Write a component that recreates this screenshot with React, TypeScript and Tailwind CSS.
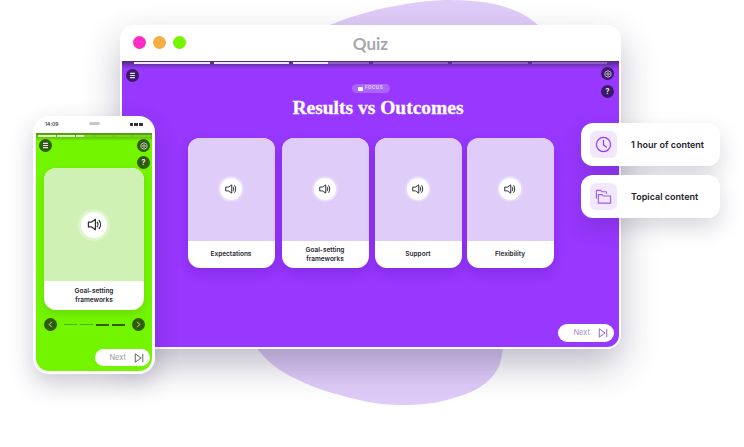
import React from "react";

const Speaker = ({ s = 12 }: { s?: number }) => (
  <svg width={s} height={s} viewBox="0 0 16 16" fill="none" stroke="#2b2b33" strokeWidth="1.300" strokeLinejoin="round" strokeLinecap="round">
    <path d="M1.500 5.500h3L9 2.500v11l-4.500-3h-3z" />
    <path d="M11 5.500c1 1.500 1 3.500 0 5" />
    <path d="M13 3.500c1.800 2.500 1.800 6.500 0 9" />
  </svg>
);

const Sound = ({ big }: { big?: boolean }) => (
  <div className={big ? "flex h-[32px] w-[32px] items-center justify-center rounded-full bg-white/30" : "flex h-[26px] w-[26px] items-center justify-center rounded-full bg-white/30"}>
    <div className={big ? "flex h-[26px] w-[26px] items-center justify-center rounded-full bg-white" : "flex h-[22px] w-[22px] items-center justify-center rounded-full bg-white"}>
      <Speaker s={big ? 15 : 12} />
    </div>
  </div>
);

const Card = ({ label, className = "" }: { label: React.ReactNode; className?: string }) => (
  <div className={`flex h-[130px] w-[87px] flex-col overflow-hidden rounded-[12px] bg-white shadow-[0_6px_12px_rgba(60,0,130,0.2)] ${className}`}>
    <div className="flex h-[103px] items-center justify-center bg-[#e0ccf9] pb-[1px]">
      <Sound />
    </div>
    <div className="flex flex-1 items-center justify-center text-center text-[6.500px] font-semibold leading-[9px] text-[#26262e]">{label}</div>
  </div>
);

const Round = ({ children, c = "bg-[#3b1a66]" }: { children: React.ReactNode; c?: string }) => (
  <div className={`flex h-[13px] w-[13px] items-center justify-center rounded-full ${c}`}>{children}</div>
);

const Menu = ({ s = 7 }: { s?: number }) => (
  <svg width={s} height={s} viewBox="0 0 10 10" fill="none" stroke="#e8e0f2" strokeWidth="1.700">
    <path d="M1.500 2h7M1.500 5h7M1.500 8h7" />
  </svg>
);
const Gear = ({ s = 8 }: { s?: number }) => (
  <svg width={s} height={s} viewBox="0 0 10 10" fill="none" stroke="#e8e0f2" strokeWidth="1">
    <path d="M5 .8l3.700 2.100v4.200L5 9.200 1.300 7.100V2.900z" />
    <circle cx="5" cy="5" r="1.500" />
  </svg>
);
const Q = () => <span className="text-[7px] font-bold leading-none text-[#f0eaf7]">?</span>;

const NextIcon = ({ color, s = 10 }: { color: string; s?: number }) => (
  <svg width={s} height={s} viewBox="0 0 12 12" fill="none" stroke={color} strokeWidth="1.100" strokeLinejoin="round">
    <path d="M1.500 1l7 5-7 5zM10.500 1v10" />
  </svg>
);

const Tag = ({ icon, text, className }: { icon: React.ReactNode; text: string; className: string }) => (
  <div className={`absolute flex h-[43px] w-[139px] items-center rounded-[12px] bg-white pl-[9px] shadow-[0_10px_22px_rgba(40,30,70,0.18)] ${className}`}>
    <div className="flex h-[27px] w-[27px] items-center justify-center rounded-[6px] bg-[#f1e8fd]">{icon}</div>
    <span className="ml-[14px] text-[9px] font-semibold text-[#23232b]">{text}</span>
  </div>
);

const Seg = ({ fill }: { fill: "full" | "part" | "none" }) => (
  <div className="h-[2px] flex-1 bg-[#8b62c0]">
    {fill === "full" && <div className="h-full w-full bg-[#efe8f6]" />}
    {fill === "part" && <div className="h-full w-[47%] bg-[#efe8f6]" />}
  </div>
);

const PSeg = ({ fill }: { fill: "full" | "part" | "none" }) => (
  <div className="h-[2px] flex-1 bg-[#7fcf2e]">
    {fill === "full" && <div className="h-full w-full bg-[#dff7c6]" />}
    {fill === "part" && <div className="h-full w-[47%] bg-[#dff7c6]" />}
  </div>
);

export default function App() {
  return (
    <div className="relative h-[447px] w-[744px] overflow-hidden bg-white font-['Inter',sans-serif]">
      <svg className="absolute left-0 top-0" width="744" height="447" viewBox="0 0 744 447">
        <path d="M330 25C370 8 420 0 450 0C490 0 520 8 538 25V60H330Z" fill="#e0ccf9" />
        <path d="M250 340C262 355 270 364 283 372C300 382 320 390 340 395C360 401 380 405 400 405C418 405 433 404 447 400C465 395 478 390 487 382C497 373 503 364 503 340Z" fill="#e0ccf9" />
      </svg>

      <div className="absolute left-[120px] top-[25px] flex h-[324px] w-[501px] flex-col overflow-hidden rounded-[14px] bg-white p-[2px] pt-0 shadow-[0_16px_36px_rgba(40,30,70,0.3)]">
        <div className="relative flex h-[36px] flex-none items-center justify-center">
          <div className="absolute left-[11px] top-[11px] flex gap-[7px]">
            <div className="h-[13px] w-[13px] rounded-full bg-[#ff2bc2]" />
            <div className="h-[13px] w-[13px] rounded-full bg-[#f5ae42]" />
            <div className="h-[13px] w-[13px] rounded-full bg-[#76f500]" />
          </div>
          <span className="mt-[1px] font-['Lato',sans-serif] text-[17px] font-bold text-[#a8a8ad]">Quiz</span>
        </div>
        <div className="relative flex flex-1 flex-col items-center overflow-hidden rounded-b-[12px] bg-[#9837ff]">
          <div className="absolute inset-x-0 top-0 h-[8px] bg-gradient-to-b from-[#4d2a7d] to-[#9837ff]" />
          <div className="relative mt-[1px] flex w-[473px] gap-[4px]">
            <Seg fill="full" />
            <Seg fill="full" />
            <Seg fill="part" />
            <Seg fill="none" />
            <Seg fill="none" />
            <Seg fill="none" />
          </div>
          <div className="absolute left-[4px] top-[8px]"><Round><Menu /></Round></div>
          <div className="absolute right-[5px] top-[6px]"><Round><Gear /></Round></div>
          <div className="absolute right-[5px] top-[24px]"><Round><Q /></Round></div>
          <div className="mt-[20px] flex h-[9px] w-[38px] items-center justify-center gap-[2px] rounded-full bg-[#ac66ff]">
            <div className="h-[4px] w-[5px] rounded-[1px] bg-white" />
            <span className="text-[4.500px] font-semibold tracking-[0.5px] text-[#f0e4ff]">FOCUS</span>
          </div>
          <h1 className="mt-[3px] pl-[15px] font-['Liberation_Serif',serif] text-[19.500px] font-bold leading-[24px] text-white [-webkit-text-stroke:0.3px_white]">Results vs Outcomes</h1>
          <div className="mt-[18px] flex">
            <Card label="Expectations" />
            <Card className="ml-[7px]" label={<>Goal-setting<br />frameworks</>} />
            <Card className="ml-[6px]" label="Support" />
            <Card className="ml-[5px]" label="Flexibility" />
          </div>
          <div className="absolute bottom-[5px] right-[5px] flex h-[18px] w-[56px] items-center justify-end gap-[8px] rounded-full bg-white pr-[6px]">
            <span className="text-[7.500px] text-[#a98ac9]">Next</span>
            <NextIcon color="#8a55c8" />
          </div>
        </div>
      </div>

      <div className="absolute left-[33px] top-[116px] flex h-[258px] w-[122px] flex-col overflow-hidden rounded-[16px] bg-white px-[3px] pb-[3px] shadow-[0_10px_24px_rgba(40,30,70,0.24)]">
        <div className="relative flex h-[17px] flex-none items-center justify-between px-[9px]">
          <span className="text-[5px] font-semibold text-[#444]">14:09</span>
          <div className="flex items-center gap-[1px]">
            <div className="h-[3px] w-[3px] bg-[#333]" />
            <div className="h-[3px] w-[4px] bg-[#333]" />
            <div className="h-[3px] w-[4px] bg-[#333]" />
          </div>
        </div>
        <div className="relative flex flex-1 flex-col items-center overflow-hidden rounded-b-[13px] bg-[#73f500]">
          <div className="absolute inset-x-0 top-0 h-[8px] bg-gradient-to-b from-[#4e9a06] to-[#73f500]" />
          <div className="relative mt-[2px] flex w-[113px] gap-[1px]">
            <PSeg fill="full" />
            <PSeg fill="full" />
            <PSeg fill="part" />
            <PSeg fill="none" />
            <PSeg fill="none" />
            <PSeg fill="none" />
          </div>
          <div className="absolute left-[3px] top-[6px]"><Round c="bg-[#2f5c0a]"><Menu /></Round></div>
          <div className="absolute right-[2px] top-[6px]"><Round c="bg-[#2f5c0a]"><Gear /></Round></div>
          <div className="absolute right-[2px] top-[23px]"><Round c="bg-[#2f5c0a]"><Q /></Round></div>
          <div className="mt-[31px] flex h-[142px] w-[100px] flex-col overflow-hidden rounded-[12px] bg-white shadow-[0_4px_8px_rgba(40,90,0,0.15)]">
            <div className="flex h-[113px] items-center justify-center bg-[#d0f1b4]">
              <Sound big />
            </div>
            <div className="flex flex-1 items-center justify-center text-center text-[6.500px] font-semibold leading-[9px] text-[#26262e]">Goal-setting<br />frameworks</div>
          </div>
          <div className="mt-[8px] flex w-[101px] items-center justify-between">
            <div className="flex h-[13px] w-[13px] items-center justify-center rounded-full bg-[#2f5c0a]">
              <svg width="7" height="7" viewBox="0 0 8 8" fill="none" stroke="#e6f6d6" strokeWidth="1"><path d="M5.500 1L2.500 4l3 3" /></svg>
            </div>
            <div className="flex items-center gap-[3px]">
              <div className="h-[1px] w-[13px] bg-[#55a815]" />
              <div className="h-[1px] w-[13px] bg-[#55a815]" />
              <div className="h-[2px] w-[13px] bg-[#2f5c0a]" />
              <div className="h-[2px] w-[13px] bg-[#2f5c0a]" />
            </div>
            <div className="flex h-[13px] w-[13px] items-center justify-center rounded-full bg-[#2f5c0a]">
              <svg width="7" height="7" viewBox="0 0 8 8" fill="none" stroke="#e6f6d6" strokeWidth="1"><path d="M2.500 1l3 3-3 3" /></svg>
            </div>
          </div>
          <div className="mr-[2px] mt-[18px] flex h-[17px] w-[55px] items-center justify-end gap-[8px] self-end rounded-full bg-white pr-[6px]">
            <span className="text-[7.500px] text-[#9a9a9a]">Next</span>
            <NextIcon color="#555" />
          </div>
        </div>
      </div>
      <div className="absolute left-[66px] top-[116px] h-[16px] w-[56px] rounded-b-[9px] bg-white">
        <div className="mx-auto mt-[6px] h-[3px] w-[11px] rounded-full bg-[#c8c8cc]" />
      </div>

      <Tag
        className="left-[581px] top-[123px]"
        text="1 hour of content"
        icon={
          <svg width="17" height="17" viewBox="0 0 18 18" fill="none" stroke="#9837ff" strokeWidth="1.300" strokeLinecap="round">
            <circle cx="9" cy="9" r="7.500" />
            <path d="M9 4.500V9.500l3 2.200" />
          </svg>
        }
      />
      <Tag
        className="left-[581px] top-[175px]"
        text="Topical content"
        icon={
          <svg width="17" height="17" viewBox="0 0 18 18" fill="none" stroke="#9a5cf0" strokeWidth="1.200" strokeLinejoin="round">
            <path d="M1.500 11V2.500h4.500l1.500 1.500H12V6" />
            <path d="M3.500 16V7h4l1.500 1.500h7.500V16z" />
          </svg>
        }
      />
    </div>
  );
}
